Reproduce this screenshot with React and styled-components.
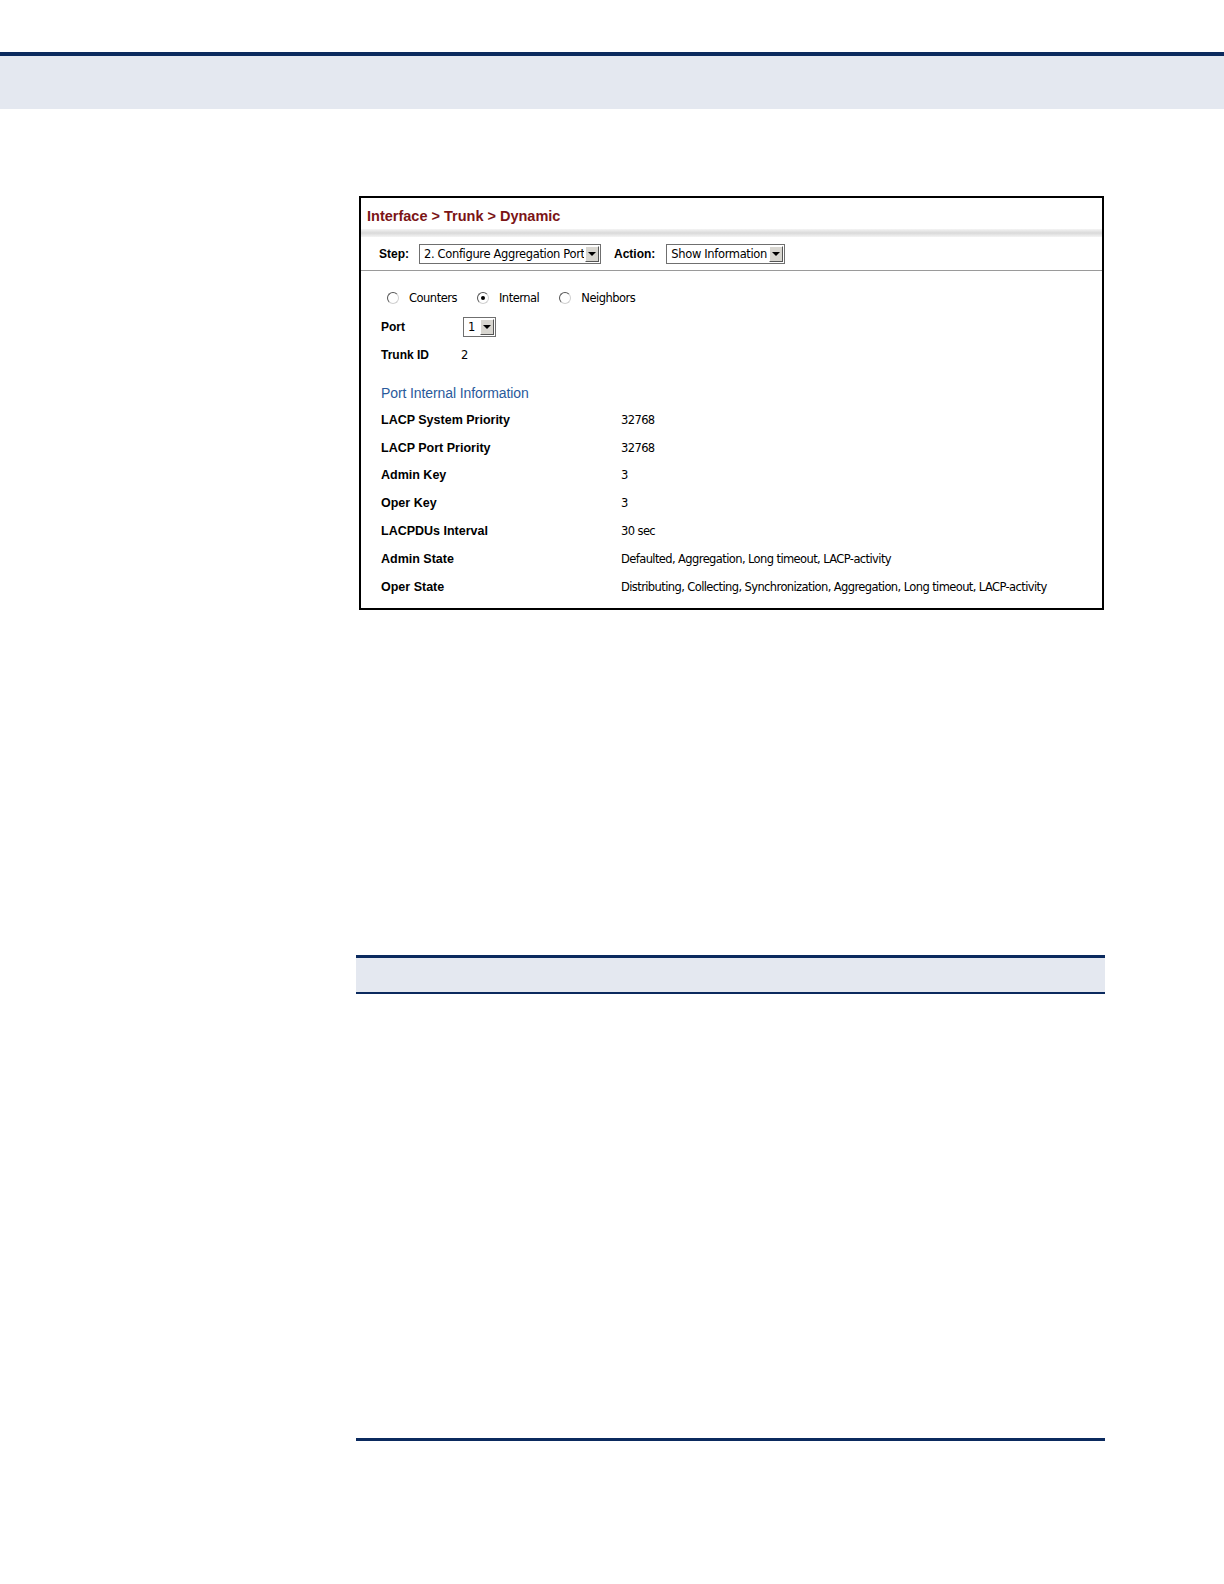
import styled, { createGlobalStyle } from 'styled-components';

const Global = createGlobalStyle`
  html, body {
    margin: 0;
    padding: 0;
    background: #fff;
  }
  body {
    font-family: "Liberation Sans", Arial, sans-serif;
    color: #000;
  }
`;

const Page = styled.div`
  width: 1224px;
  height: 1584px;
  padding-top: 52px;
  box-sizing: border-box;
`;

// header band at the top of the page
const TopBand = styled.div`
  height: 53px;
  border-top: 4px solid #0b2a5e;
  background: #e4e8f0;
`;

const Content = styled.div`
  padding: 87px 0 0 356px;
`;

// screenshot panel
const Panel = styled.div`
  width: 745px;
  margin-left: 3px;
  border: 2px solid #000;
  box-sizing: border-box;
  height: 414px;
  padding-top: 10px;
`;

const Title = styled.div`
  font-size: 14.5px;
  font-weight: 700;
  color: #7b1416;
  padding-left: 6px;
  height: 21px;
`;

const Shade = styled.div`
  height: 8px;
  background: linear-gradient(#f4f4f4, #d9d9d9 50%, #f4f4f4);
`;

const StepBar = styled.div`
  display: flex;
  align-items: center;
  height: 33px;
  padding-left: 18px;
  border-bottom: 1px solid #9a9a9a;
  font-size: 12px;
`;

const BoldLabel = styled.span`
  font-weight: 700;
  font-size: 12px;
  margin-right: ${(p) => p.gap || 10}px;
`;

const Select = styled.div`
  display: flex;
  align-items: stretch;
  width: ${(p) => p.width}px;
  height: ${(p) => p.height || 20}px;
  border: 1px solid #6f6f6f;
  box-sizing: border-box;
  background: #fff;
  margin-right: ${(p) => p.mr || 0}px;
`;

const SelectText = styled.div`
  flex: 1;
  font-size: 11.5px;
  line-height: 18px;
  padding-left: 4px;
  white-space: nowrap;
  overflow: hidden;
  font-family: "DejaVu Sans", Tahoma, sans-serif;
  letter-spacing: -0.35px;
`;

const Arrow = styled.div`
  width: 14px;
  margin: 1px;
  background: #d8d6d0;
  border: 1px solid;
  border-color: #fff #555 #555 #fff;
  box-sizing: border-box;
  display: flex;
  align-items: center;
  justify-content: center;
  &::after {
    content: '';
    border-left: 4px solid transparent;
    border-right: 4px solid transparent;
    border-top: 4px solid #000;
  }
`;

const Body = styled.div`
  padding: 19px 0 0 20px;
`;

const RadioRow = styled.div`
  display: flex;
  align-items: center;
  height: 16px;
  padding-left: 6px;
  margin-bottom: 7px;
`;

const RadioItem = styled.label`
  display: flex;
  align-items: center;
  font-family: "DejaVu Sans", Tahoma, sans-serif;
  font-size: 11.5px;
  letter-spacing: -0.5px;
  margin-right: 20px;
`;

const Circle = styled.span`
  width: 12px;
  height: 12px;
  border-radius: 50%;
  border: 1px solid;
  border-color: #555 #d0d0d0 #d0d0d0 #555;
  box-sizing: border-box;
  margin-right: 10px;
  display: flex;
  align-items: center;
  justify-content: center;
  &::after {
    content: '';
    display: ${(p) => (p.checked ? 'block' : 'none')};
    width: 4px;
    height: 4px;
    border-radius: 50%;
    background: #000;
  }
`;

const FieldRow = styled.div`
  display: flex;
  align-items: center;
  height: 28px;
`;

const FieldLabel = styled.div`
  width: ${(p) => p.width}px;
  font-weight: 700;
  font-size: 12px;
`;

const Plain = styled.div`
  font-family: "DejaVu Sans", Tahoma, sans-serif;
  font-size: 11.5px;
  letter-spacing: -0.35px;
`;

const Section = styled.div`
  color: #2a5a9c;
  font-size: 14px;
  margin: 14px 0 3px 0;
  height: 20px;
  line-height: 20px;
  letter-spacing: -0.1px;
`;

const InfoRow = styled.div`
  display: grid;
  grid-template-columns: 240px 1fr;
  align-items: center;
  height: 27.8px;
`;

const InfoLabel = styled.div`
  font-weight: 700;
  font-size: 12.5px;
`;

const InfoValue = styled.div`
  font-family: "DejaVu Sans", Tahoma, sans-serif;
  font-size: 11.5px;
  letter-spacing: -0.6px;
  white-space: nowrap;
`;

// lower table frame
const TableHead = styled.div`
  width: 749px;
  margin-top: 345px;
  height: 34px;
  border-top: 3px solid #0b2a5e;
  border-bottom: 2px solid #0b2a5e;
  background: #e4e8f0;
`;

const TableEnd = styled.div`
  width: 749px;
  margin-top: 444px;
  border-top: 3px solid #0b2a5e;
`;

const info = [
  ['LACP System Priority', '32768'],
  ['LACP Port Priority', '32768'],
  ['Admin Key', '3'],
  ['Oper Key', '3'],
  ['LACPDUs Interval', '30 sec'],
  ['Admin State', 'Defaulted, Aggregation, Long timeout, LACP-activity'],
  ['Oper State', 'Distributing, Collecting, Synchronization, Aggregation, Long timeout, LACP-activity'],
];

export default function App() {
  return (
    <Page>
      <Global />
      <TopBand />
      <Content>
        <Panel>
          <Title>Interface &gt; Trunk &gt; Dynamic</Title>
          <Shade />
          <StepBar>
            <BoldLabel>Step:</BoldLabel>
            <Select width={182} mr={13}>
              <SelectText>2. Configure Aggregation Port</SelectText>
              <Arrow />
            </Select>
            <BoldLabel gap={11}>Action:</BoldLabel>
            <Select width={119}>
              <SelectText>Show Information</SelectText>
              <Arrow />
            </Select>
          </StepBar>
          <Body>
            <RadioRow>
              <RadioItem>
                <Circle />
                Counters
              </RadioItem>
              <RadioItem>
                <Circle checked />
                Internal
              </RadioItem>
              <RadioItem>
                <Circle />
                Neighbors
              </RadioItem>
            </RadioRow>
            <FieldRow>
              <FieldLabel width={82}>Port</FieldLabel>
              <Select width={33} height={20}>
                <SelectText>1</SelectText>
                <Arrow />
              </Select>
            </FieldRow>
            <FieldRow>
              <FieldLabel width={80}>Trunk ID</FieldLabel>
              <Plain>2</Plain>
            </FieldRow>
            <Section>Port Internal Information</Section>
            {info.map(([k, v]) => (
              <InfoRow key={k}>
                <InfoLabel>{k}</InfoLabel>
                <InfoValue>{v}</InfoValue>
              </InfoRow>
            ))}
          </Body>
        </Panel>
        <TableHead />
        <TableEnd />
      </Content>
    </Page>
  );
}
